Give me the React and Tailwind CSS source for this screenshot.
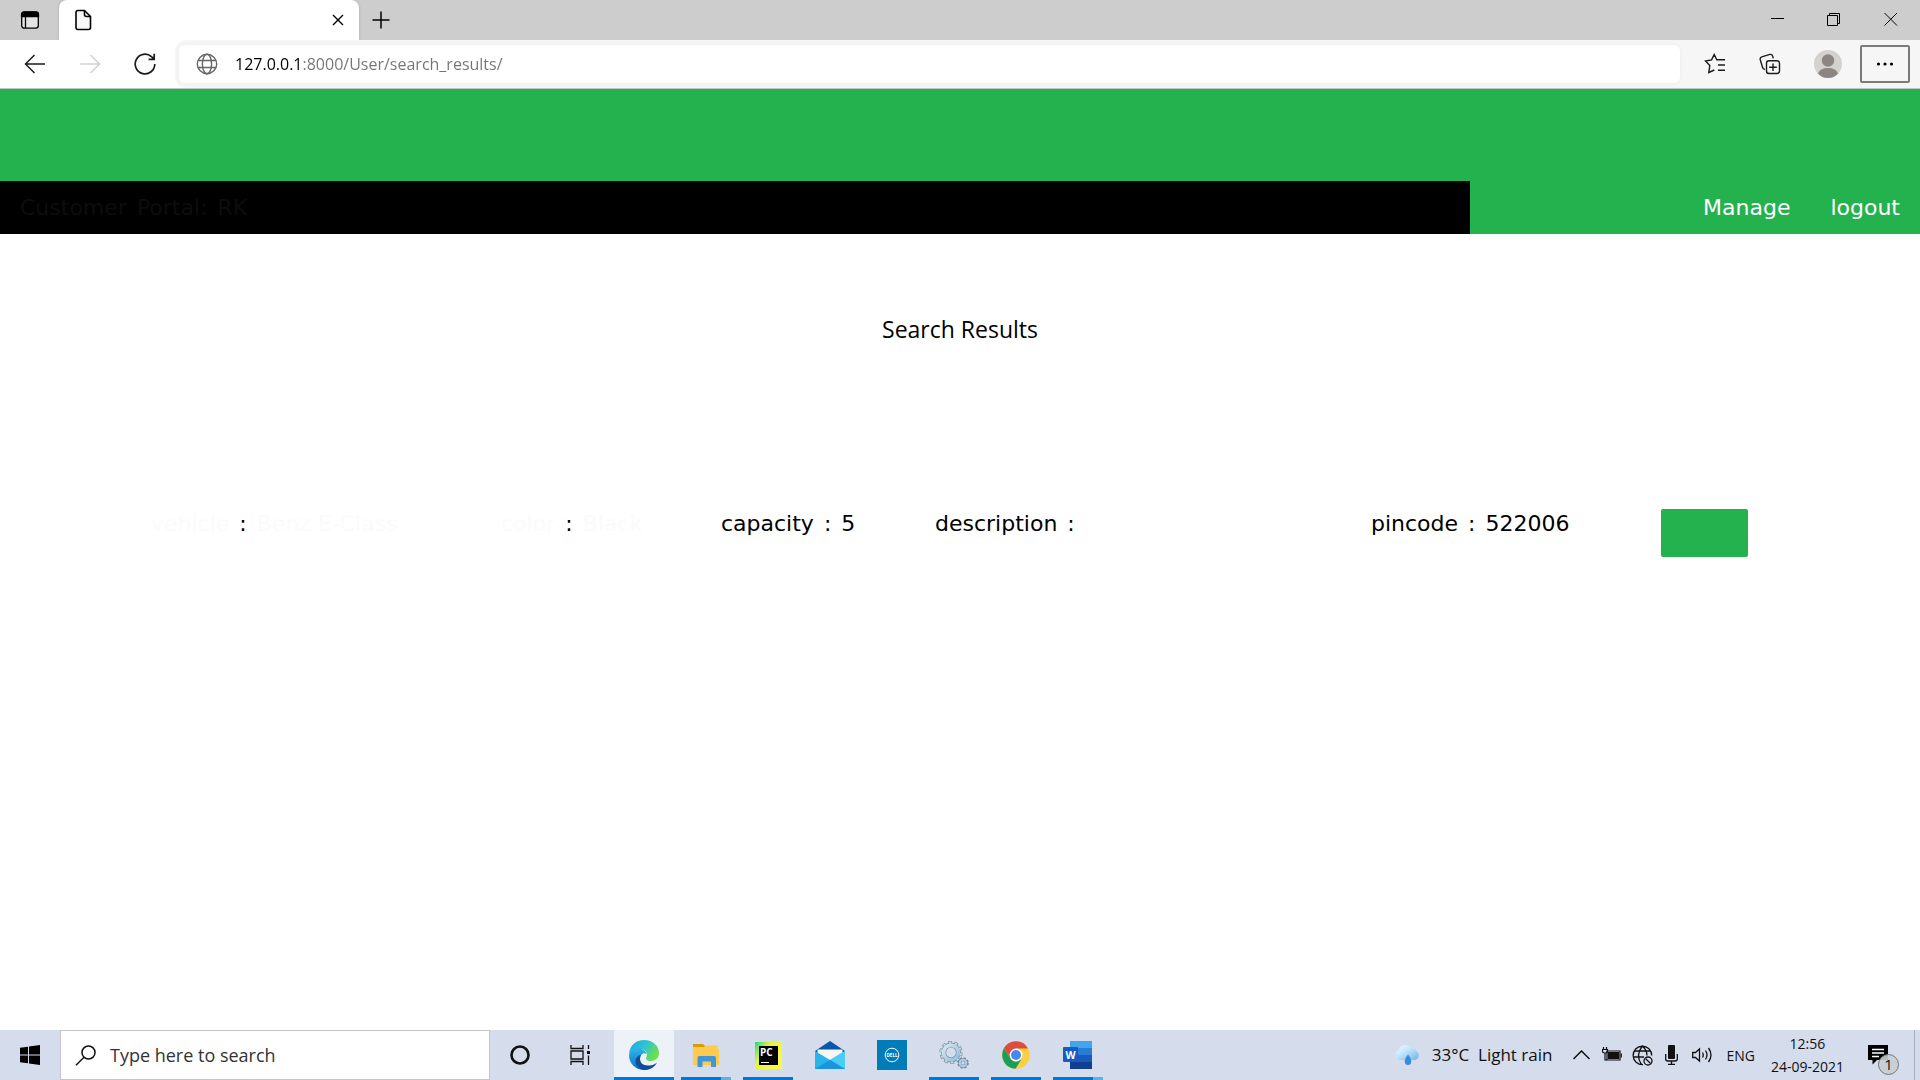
import React from "react";

const UI = "font-['Open_Sans','Noto_Sans',sans-serif]";

function Svg({ className, box = "0 0 20 20", children, sw = 1.3 }) {
  return (
    <svg aria-hidden="true" viewBox={box} className={className} fill="none" stroke="currentColor" strokeWidth={sw}>
      {children}
    </svg>
  );
}

function TabStrip() {
  return (
    <div className="flex h-10 items-stretch bg-[#cdcdcd] text-black">
      <button aria-label="Tab actions" className="flex w-[59px] items-center justify-center">
        <Svg className="size-5">
          <rect x="1.7" y="2.2" width="16.6" height="16" rx="2.6" fill="#e4e4e4" />
          <path d="M1.5 6.5V4.5Q1.5 2 4 2H16Q18.5 2 18.5 4.5V6.5Z" fill="currentColor" />
          <path d="M5.5 6V18" />
        </Svg>
      </button>
      <div className="flex w-[300px] items-center justify-between rounded-t-lg bg-white pr-[11px] pl-3.5 shadow-[0_0_3px_#00000030]">
        <Svg className="h-[22px] w-5" box="0 0 20 22" sw={1.6}>
          <path d="M5 1.5H11.5L17.5 7.5V18.5Q17.5 20.5 15.5 20.5H5Q3 20.5 3 18.5V3.5Q3 1.5 5 1.5Z" fill="#f8f8f8" />
          <path d="M11.5 1.5V5.5Q11.5 7.5 13.5 7.5H17.5" />
        </Svg>
        <button aria-label="Close tab" className="p-1">
          <Svg className="size-3" box="0 0 12 12" sw={1.4}><path d="M1 1L11 11M11 1L1 11" /></Svg>
        </button>
      </div>
      <button aria-label="New tab" className="ml-3 flex items-center">
        <Svg className="size-5" sw={1.5}><path d="M10 1.5V18.5M1.5 10H18.5" /></Svg>
      </button>
      <div className="ml-auto flex">
        <button aria-label="Minimize" className="flex w-14 items-center justify-center">
          <Svg className="size-[14px]" box="0 0 14 14" sw={1}><path d="M0 5.5H13" /></Svg>
        </button>
        <button aria-label="Restore" className="flex w-14 items-center justify-center">
          <Svg className="size-[14px]" box="0 0 14 14" sw={1}><path d="M.5 2.5H10.5V12.5H.5ZM2.5 2.500V.5H12.500V10.500H10.5" /></Svg>
        </button>
        <button aria-label="Close" className="flex w-[58px] items-center justify-center">
          <Svg className="size-[14px]" box="0 0 14 14" sw={1}><path d="M.5 0L13 12.5M13 0L.5 12.5" /></Svg>
        </button>
      </div>
    </div>
  );
}

function Toolbar() {
  return (
    <div className="flex h-[49px] items-stretch border-b border-[#c4c4c4] bg-white text-[#1b1b1b]">
      <div className="flex w-[175px] items-center gap-[33px] pl-6">
        <button aria-label="Back"><Svg className="size-[22px]" box="0 0 22 22" sw={1.5}><path d="M21 11H1.5M10.5 2L1.5 11L10.5 20" /></Svg></button>
        <button aria-label="Forward" className="text-[#d2d2d2]"><Svg className="size-[22px]" box="0 0 22 22" sw={1.5}><path d="M1 11H20.5M11.5 2L20.5 11L11.5 20" /></Svg></button>
        <button aria-label="Refresh"><Svg className="size-[22px]" box="0 0 22 22" sw={1.7}><path d="M20.8 11A9.8 9.8 0 1 1 17.5 3.7L20 6M20.2 .8V6.3H14.6" /></Svg></button>
      </div>
      <div className="flex flex-1 items-center rounded-l-xl bg-[#f6f6f6] pl-1">
        <div className="flex h-[38px] flex-1 items-center gap-[17px] rounded-md bg-white pl-[17px] shadow-[0_0_5px_#0000000c]">
          <Svg className="size-[22px] text-[#666]" box="0 0 22 22" sw={1.4}>
            <circle cx="11" cy="11" r="9.7" /><ellipse cx="11" cy="11" rx="4.6" ry="9.7" /><path d="M2.3 7.5H19.7M2.3 14.5H19.7" />
          </Svg>
          <input
            aria-label="Address"
            defaultValue="127.0.0.1:8000/User/search_results/"
            className={`${UI} min-w-0 flex-1 bg-[linear-gradient(to_right,#000_67px,#747474_67px)] bg-clip-text text-[16px] text-transparent outline-none`}
          />
        </div>
        <div className="flex h-full items-center">
          <button aria-label="Favorites" className="ml-6"><Svg className="size-[22px]" box="0 0 22 22" sw={1.4}><path d="M15 6.8L12.8 6.7L10.2 1.5L7.6 6.9L1.5 8L5.8 12.4L4.8 19.5L10.3 17M12.8 6.7H21M14 12H21M14 17.3H21" /></Svg></button>
          <button aria-label="Collections" className="ml-[33px]"><Svg className="size-[22px]" box="0 0 22 22" sw={1.4}><rect x="7.5" y="7.8" width="13" height="12.7" rx="2.5" /><path d="M14 10.5V18M10.2 14.2H17.8M5.8 16.5Q4 16 3.5 14.2L1.2 6.5Q.8 4.5 2.8 3.8L10.8 1.4Q13 1 13.6 3L14.3 5.4" /></Svg></button>
          <button aria-label="Profile" className="ml-[33px]">
            <svg aria-hidden="true" viewBox="0 0 28 28" className="size-7"><circle cx="14" cy="14" r="14" fill="#d4d2ce" /><circle cx="14" cy="10.5" r="6.2" fill="#8b8682" /><path d="M4 23.5Q6 18 14 18T24 23.5Q20 28 14 28T4 23.5Z" fill="#8b8682" /></svg>
          </button>
          <button aria-label="Settings and more" className="mr-2.5 ml-[18px] flex h-[38px] w-[50px] items-center justify-center rounded-xs border-2 border-[#7b7b7b]">
            <svg aria-hidden="true" viewBox="0 0 18 4" className="h-1 w-[18px]"><circle cx="2.5" cy="2" r="1.6" /><circle cx="9" cy="2" r="1.6" /><circle cx="15.5" cy="2" r="1.6" /></svg>
          </button>
        </div>
      </div>
    </div>
  );
}

function Field({ label, value, faint }) {
  const tone = faint ? "text-[#fbfbfb]" : "";
  return (
    <p className="flex gap-2.5">
      <span className={tone}>{label}</span>
      <span>:</span>
      {value && <span className={tone}>{value}</span>}
    </p>
  );
}

function Page() {
  return (
    <div className="flex-1 bg-white font-['DejaVu_Sans',sans-serif] text-[22px] leading-[30px] text-black">
      <header className="h-[92px] bg-[#24b24e]" />
      <nav className="flex h-[53px] items-center bg-[#24b24e] text-white">
        <div className="flex h-full w-[1470px] max-w-[77%] items-center gap-2.5 bg-black pl-5 text-[#0d0d0d]">
          <span>Customer</span><span>Portal:</span><span>RK</span>
        </div>
        <div className="ml-auto flex gap-10 pr-5">
          <a href="#manage">Manage</a>
          <a href="#logout">logout</a>
        </div>
      </nav>
      <main>
        <h1 className={`${UI} mt-[79px] text-center text-[23px] leading-8`}>Search Results</h1>
        <div className="mt-[164px] grid grid-cols-[350fr_220fr_214fr_436fr_290fr_259fr] pl-[151px] whitespace-nowrap">
          <Field label="vehicle" value="Benz E-Class" faint />
          <Field label="color" value="Black" faint />
          <Field label="capacity" value="5" />
          <Field label="description" />
          <Field label="pincode" value="522006" />
          <button aria-label="Select" className="h-12 w-[87px] rounded-xs bg-[#24b24e]" />
        </div>
      </main>
    </div>
  );
}

const EdgeIcon = () => (
  <svg aria-hidden="true" viewBox="0 0 30 30" className="size-[30px]">
    <defs>
      <linearGradient id="eg" x1="0" x2="1" y1="0" y2=".5"><stop stopColor="#1ea6e6" /><stop offset=".55" stopColor="#30c5cf" /><stop offset="1" stopColor="#6be04b" /></linearGradient>
      <linearGradient id="eb" x1="0" x2="0" y1="0" y2="1"><stop stopColor="#2bb3ec" /><stop offset="1" stopColor="#1272c8" /></linearGradient>
    </defs>
    <path d="M0 14C1 5 7 0 15 0C24 0 30 6 30 13C30 18 26 21 22 21C18 21 16 19 17.5 17C19 14 17 9 11 9C6 9 2 11 0 14Z" fill="url(#eg)" />
    <path d="M0 15C1 11 5 8.500 9.5 8.5C14 8.5 17 11 17.5 14C14 12 11 15 11 19C11 24 15 28 19 29.4C8 32 0 24 0 15Z" fill="url(#eb)" />
    <path d="M12 15C9 21 13 26 20 25.5C24 25.5 26.5 23.5 28 22.5C26 27 21 30 16 30C10 30 6 25 6.5 20.5C7 17 9 15.5 12 15Z" fill="#0f4f98" />
  </svg>
);
const FolderIcon = () => (
  <svg aria-hidden="true" viewBox="0 0 28 24" className="h-6 w-7">
    <path d="M1 1H11L13 3V7H1Z" fill="#dd9a08" /><path d="M1 4H12L14 2.5H25.5V6H27V22H1Z" fill="#fecb50" />
    <path d="M5.5 24V15Q5.5 13 7.5 13H22Q24 13 24 15V24H19V18.5H10.5V24Z" fill="#3f97d9" />
  </svg>
);
const PyIcon = () => (
  <svg aria-hidden="true" viewBox="0 0 27 27" className="size-[27px]">
    <defs><linearGradient id="py" x1="0" x2="1" y1="0" y2=".7"><stop stopColor="#21d789" /><stop offset=".4" stopColor="#e5f53c" /><stop offset="1" stopColor="#fcf84a" /></linearGradient></defs>
    <rect width="27" height="27" fill="url(#py)" /><rect x="4" y="4" width="19" height="19" fill="#000" />
    <text x="5" y="13.5" fontSize="10" fontWeight="700" fill="#fff" fontFamily="Open Sans">PC</text><rect x="6" y="20" width="8" height="1" fill="#fff" />
  </svg>
);
const MailIcon = () => (
  <svg aria-hidden="true" viewBox="0 0 30 28" className="h-7 w-[30px]">
    <path d="M0 10L15 0L30 10L28 13H2Z" fill="#0758a8" /><path d="M2.5 8.5H27.5V20H2.5Z" fill="#f7f7f7" />
    <path d="M0 10L15 19L30 10V28H0Z" fill="#28b3ea" /><path d="M15 19L30 10V28Z" fill="#4bcdf6" /><path d="M15 19L30 28H0L15 19Z" fill="#1b94df" />
  </svg>
);
const DellIcon = () => (
  <svg aria-hidden="true" viewBox="0 0 30 30" className="size-[30px]">
    <rect width="30" height="30" fill="#007db8" /><circle cx="15" cy="15" r="6.8" fill="none" stroke="#fff" />
    <text x="15" y="16.8" fontSize="4.5" fontWeight="700" textAnchor="middle" fill="#fff" fontFamily="Open Sans">DELL</text>
  </svg>
);
const GearsIcon = () => (
  <svg aria-hidden="true" viewBox="0 0 30 30" className="size-[30px]" fill="none">
    <defs><linearGradient id="gr" x1="0" x2="1" y1="0" y2="1"><stop stopColor="#d6e6f0" /><stop offset="1" stopColor="#8fc0de" /></linearGradient></defs>
    <circle cx="12" cy="12.500" r="10" stroke="#7d8c9b" strokeWidth="3.2" strokeDasharray="3.6 2.683" />
    <circle cx="12" cy="12.500" r="7.4" stroke="#7a8998" strokeWidth="5" /><circle cx="12" cy="12.500" r="7.4" stroke="url(#gr)" strokeWidth="3.8" />
    <circle cx="12" cy="12.500" r="10" stroke="#c2d8e6" strokeWidth="2" strokeDasharray="2.400 3.883" strokeDashoffset="-.6" />
    <circle cx="24" cy="23" r="4.8" stroke="#768798" strokeWidth="2" strokeDasharray="2.2 1.57" /><circle cx="24" cy="23" r="3.2" stroke="#768798" strokeWidth="3" /><circle cx="24" cy="23" r="3.200" stroke="#a9d0e8" strokeWidth="2" />
  </svg>
);
const ChromeIcon = () => (
  <svg aria-hidden="true" viewBox="0 0 28 28" className="size-7">
    <circle cx="14" cy="14" r="13.8" fill="#fdcf41" />
    <path d="M2 7.1A13.8 13.8 0 0 1 26 7.5H14L8.3 17.2Z" fill="#dc4c40" />
    <path d="M2 7.1L8.4 17.5Q11 21 14.5 20.5L19.5 18L13.5 27.8A13.8 13.8 0 0 1 2 7.1Z" fill="#1b9e57" />
    <circle cx="14" cy="14" r="6.4" fill="#fff" /><circle cx="14" cy="14" r="5" fill="#4587f3" />
  </svg>
);
const WordIcon = () => (
  <svg aria-hidden="true" viewBox="0 0 30 28" className="h-7 w-[30px]">
    <path d="M7 0H29V7H7Z" fill="#41a5ee" /><path d="M7 7H29V14H7Z" fill="#2b7cd3" /><path d="M7 14H29V21H7Z" fill="#185abd" /><path d="M7 21H29V28H7Z" fill="#103f91" />
    <rect y="6" width="15" height="15" rx="1" fill="#185abd" /><text x="7.5" y="17.5" fontSize="10.5" fontWeight="700" textAnchor="middle" fill="#fff" fontFamily="Open Sans">W</text>
  </svg>
);

const APPS = [
  { name: "Microsoft Edge", Icon: EdgeIcon, tile: "bg-[#edf1f8]", bar: "w-full bg-[#0078d7]" },
  { name: "File Explorer", Icon: FolderIcon, bar: "w-[50px] bg-[linear-gradient(to_right,#0078d7_80%,#62aee8_80%)]" },
  { name: "PyCharm", Icon: PyIcon, bar: "w-[50px] bg-[#0078d7]" },
  { name: "Mail", Icon: MailIcon },
  { name: "Dell", Icon: DellIcon },
  { name: "Services", Icon: GearsIcon, bar: "w-[50px] bg-[#0078d7]" },
  { name: "Google Chrome", Icon: ChromeIcon, bar: "w-[50px] bg-[#0078d7]" },
  { name: "Word", Icon: WordIcon, bar: "w-[50px] bg-[linear-gradient(to_right,#0078d7_80%,#62aee8_80%)]" },
];

function Taskbar() {
  return (
    <footer className={`${UI} flex h-[50px] items-stretch bg-[#d5dcec] text-[#111]`}>
      <button aria-label="Start" className="flex w-[60px] items-center justify-center">
        <svg aria-hidden="true" viewBox="0 0 20 20" className="size-5"><path d="M0 2.8L8 1.7V9.5H0ZM9 1.5L20 0V9.5H9ZM0 10.5H8V18.3L0 17.2ZM9 10.5H20V20L9 18.5Z" /></svg>
      </button>
      <label className="flex w-[430px] items-center gap-3.5 border border-[#c3c5ca] bg-white pl-3.5">
        <Svg className="size-[21px]" box="0 0 21 21" sw={1.5}><circle cx="13.5" cy="7.5" r="6.5" /><path d="M9 12.3L1 20.3" /></Svg>
        <input aria-label="Search" placeholder="Type here to search" className="min-w-0 flex-1 text-[18px] outline-none placeholder:text-[#333]" />
      </label>
      <button aria-label="Cortana" className="flex w-[60px] items-center justify-center"><Svg className="size-5" sw={2.6}><circle cx="10" cy="10" r="8.5" /></Svg></button>
      <button aria-label="Task View" className="mr-1 flex w-[60px] items-center justify-center">
        <Svg className="size-5"><path d="M1 0V3.5H13V0M1 6H13V14H1ZM1 20V16.5H13V20M18.5 0V4M18.5 10.5V20" /><path d="M17 6H20V9H17Z" fill="currentColor" stroke="none" /></Svg>
      </button>
      <div className="flex gap-0.5">
        {APPS.map(({ name, Icon, tile = "", bar }) => (
          <button key={name} aria-label={name} className={`flex w-[60px] flex-col items-center ${tile}`}>
            <span className="flex flex-1 items-center pt-[3px]"><Icon /></span>
            <span className={`h-[3px] ${bar || "w-0"}`} />
          </button>
        ))}
      </div>
      <div className="ml-auto flex items-center">
        <svg aria-hidden="true" viewBox="0 0 26 22" className="h-[22px] w-[26px]">
          <defs><linearGradient id="cl" x1="0" x2="1" y1="0" y2="1"><stop stopColor="#effaff" /><stop offset=".4" stopColor="#c5e8fb" /><stop offset="1" stopColor="#6fb4e8" /></linearGradient></defs>
          <path d="M5.5 16A5 5 0 0 1 4.5 6.5A7 7 0 0 1 17 4A5.5 5.5 0 0 1 22.500 7A5 5 0 0 1 21 16Z" fill="url(#cl)" />
          <path d="M14 10.5Q17.5 15 17.2 17.8Q16.8 21 14 21T10.8 17.8Q10.5 15 14 10.5Z" fill="#348dda" />
        </svg>
        <span className="ml-3 text-[17px] whitespace-pre">33°C  Light rain</span>
        <Svg className="ml-[21px] h-2.5 w-[17px]" box="0 0 17 10" sw={1.5}><path d="M.5 9L8.5 1L16.5 9" /></Svg>
        <Svg className="ml-3 h-4 w-5" box="0 0 20 16" sw={1.2}>
          <path d="M5 4H18V13H5Z" /><path d="M6.5 5.5H16.5V11.5H6.5Z" fill="currentColor" /><path d="M19.3 6.5V10.5M1.5 0V2.5M4.5 0V2.5M.5 2.5H5.5V5Q3 7 .5 5ZM3 6.5V13H5" />
        </Svg>
        <Svg className="ml-2.5 size-[21px]" box="0 0 21 21" sw={1.3}>
          <path d="M11 19.7A9.3 9.3 0 1 1 19.7 10.5M10.5 1Q3 10 9.5 19.5M10.5 1Q15 5.5 15 10.5M2 6H19M1 12H12" /><circle cx="16" cy="16" r="4" /><path d="M13.5 13.5L18.5 18.5" />
        </Svg>
        <Svg className="ml-3 h-5 w-[13px]" box="0 0 13 20" sw={1.3}><rect x="3" y="0" width="7" height="14" rx="1" fill="currentColor" stroke="none" /><path d="M.7 9V14Q.7 16 3 16H10Q12.3 16 12.3 14V9M6.5 16V19.3M3 19.3H10" /></Svg>
        <Svg className="ml-3.5 h-4 w-[21px]" box="0 0 21 16" sw={1.3}><path d="M.7 5.5H3.5L7.5 2V14L3.5 10.5H.7ZM10.5 5.5Q12 8 10.5 10.5M13.5 3.5Q16.5 8 13.5 12.5M16.5 1Q21.5 8 16.5 15" /></Svg>
        <span className="ml-[13px] text-[14px]">ENG</span>
        <time className="ml-4 flex flex-col text-center text-[14px] leading-[23px]"><span>12:56</span><span>24-09-2021</span></time>
        <button aria-label="Notifications, 1 new" className="relative mr-[26px] ml-6 h-5">
          <svg aria-hidden="true" viewBox="0 0 20 20" className="size-5"><path d="M0 0H20V15H9L4.5 19.5V15H0Z" /><path d="M4 4.5H16M4 8H16M4 11.5H11" stroke="#fff" strokeWidth="1.3" /></svg>
          <span className="absolute top-[9px] left-2.5 flex size-[21px] items-center justify-center rounded-full border border-[#777] bg-[#c9cdd2e6] text-[15px]">1</span>
        </button>
        <span className="mr-[5px] h-full w-px bg-[#a9afbe]" />
      </div>
    </footer>
  );
}

export default function App() {
  return (
    <div className="flex min-h-screen flex-col bg-white">
      <TabStrip />
      <Toolbar />
      <Page />
      <Taskbar />
    </div>
  );
}
